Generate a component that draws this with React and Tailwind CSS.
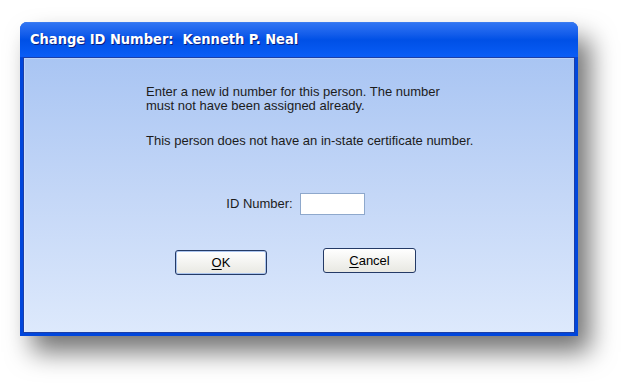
export default function App() {
  return (
    <div className="w-[632px] h-[391px] bg-white pl-[20px] pt-[22px]" style={{ fontFamily: '"Liberation Sans", Arial, sans-serif' }}>
      {/* Window */}
      <div className="w-[558px] h-[314px] flex flex-col rounded-t-[7px] bg-[#0046dc] shadow-[12px_16px_26px_rgba(0,0,0,0.55)]">
        {/* Title bar */}
        <div className="h-[35px] shrink-0 flex items-center pl-[10px] rounded-t-[7px] bg-gradient-to-b from-[#2f74f3] via-[#0050e6] to-[#0a5df6] border-t border-[#3b7cf0]">
          <span
            className="text-white font-bold text-[14.5px] [text-shadow:1px_1px_0_#0a1e80]"
            style={{ fontFamily: '"DejaVu Sans Condensed", "DejaVu Sans", sans-serif' }}
          >
            Change ID Number:&nbsp; Kenneth P. Neal
          </span>
        </div>
        {/* Client area */}
        <div className="flex-1 mx-[3px] mb-[3px] border border-[#1b3fa8] bg-gradient-to-b from-[#a9c5f3] via-[#c4d7f7] to-[#dde9fc]">
          <div className="border-l border-t border-[#ffffff40] h-full flex flex-col text-[13px] text-[#1c1c1c]">
            <div className="pl-[121px] pt-[26px] leading-[14px]">
              <p>Enter a new id number for this person. The number</p>
              <p>must not have been assigned already.</p>
              <p className="mt-[21px]">This person does not have an in-state certificate number.</p>
            </div>
            <div className="flex items-center justify-center gap-[7px] mt-[45px] pr-[8px]">
              <span>ID Number:</span>
              <div className="w-[65px] h-[22px] bg-white border border-[#8ea8cc]" />
            </div>
            <div className="flex items-start justify-center gap-[56px] mt-[34px] pr-[8px]">
              <button className="w-[92px] h-[25px] rounded-[3px] border border-[#243a66] bg-gradient-to-b from-white to-[#e8e8e2] shadow-[inset_0_0_0_1px_#aac4ee] text-[13px] text-black mt-[1px]">
                <span className="underline underline-offset-2">O</span>K
              </button>
              <button className="w-[93px] h-[25px] rounded-[3px] border border-[#243a66] bg-gradient-to-b from-white to-[#e8e8e2] text-[13px] text-black -mt-[1px]">
                <span className="underline underline-offset-2">C</span>ancel
              </button>
            </div>
          </div>
        </div>
      </div>
    </div>
  );
}
